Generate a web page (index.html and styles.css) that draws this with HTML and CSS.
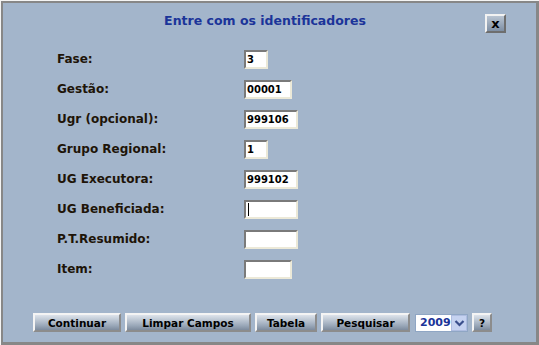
FILE: index.html
```html
<!DOCTYPE html>
<html>
<head>
<meta charset="utf-8">
<link rel="stylesheet" href="styles.css">
</head>
<body>
<div class="dialog">
  <div class="titlebar">
    <div class="title">Entre com os identificadores</div>
    <button class="close">x</button>
  </div>
  <div class="form">
    <div class="row"><span class="label">Fase:</span><span class="input w24">3</span></div>
    <div class="row"><span class="label">Gestão:</span><span class="input w48">00001</span></div>
    <div class="row"><span class="label">Ugr (opcional):</span><span class="input w54">999106</span></div>
    <div class="row"><span class="label">Grupo Regional:</span><span class="input w24">1</span></div>
    <div class="row"><span class="label">UG Executora:</span><span class="input w54">999102</span></div>
    <div class="row"><span class="label">UG Beneficiada:</span><span class="input w54"><span class="caret"></span></span></div>
    <div class="row"><span class="label">P.T.Resumido:</span><span class="input w54"></span></div>
    <div class="row"><span class="label">Item:</span><span class="input w48"></span></div>
  </div>
  <div class="actions">
    <button class="btn b-cont">Continuar</button>
    <button class="btn b-limp">Limpar Campos</button>
    <button class="btn b-tab">Tabela</button>
    <button class="btn b-pesq">Pesquisar</button>
    <div class="select"><span class="sel-val">2009</span><span class="sel-arrow"><svg width="11" height="8" viewBox="0 0 11 8"><path d="M1.5 2 L5.5 6 L9.5 2" fill="none" stroke="#3a4f8c" stroke-width="2.2"/></svg></span></div>
    <button class="btn b-help">?</button>
  </div>
</div>
</body>
</html>
```
FILE: styles.css
```css
html, body {
  margin: 0;
  padding: 0;
  background: #ffffff;
}
body {
  width: 539px;
  height: 345px;
  font-family: "DejaVu Sans", Verdana, sans-serif;
}
.dialog {
  box-sizing: border-box;
  width: 539px;
  height: 345px;
  border-top: 1px solid #f4f4f4;
  border-left: 1px solid #f4f4f4;
  display: flex;
  flex-direction: column;
  box-shadow: inset 2px 2px 0 #878787, inset -3px -3px 0 #878787;
  background: #a3b5cb;
}
.titlebar {
  position: relative;
  height: 43px;
  display: flex;
  justify-content: center;
  align-items: flex-start;
}
.title {
  margin-top: 12px;
  margin-left: -10px;
  color: #1b3499;
  font-weight: bold;
  font-size: 12.5px;
}
.close {
  position: absolute;
  left: 484px;
  top: 13px;
  width: 21px;
  height: 19px;
  padding: 0;
  box-sizing: border-box;
  border: 2px solid;
  border-color: #f2f2f2 #6e6e6e #6e6e6e #f2f2f2;
  background: linear-gradient(#b9c4d2, #7e8fa4);
  color: #000;
  font-family: "DejaVu Sans", sans-serif;
  font-weight: bold;
  font-size: 13px;
  line-height: 12px;
}
.form {
  display: flex;
  flex-direction: column;
  padding-left: 56px;
}
.row {
  height: 30px;
  display: flex;
  align-items: center;
}
.label {
  width: 187px;
  font-weight: bold;
  font-size: 12px;
  color: #1e1408;
}
.input {
  box-sizing: border-box;
  height: 19px;
  background: #ffffff;
  border: 2px solid;
  border-color: #7a7a7a #ece9d8 #ece9d8 #7a7a7a;
  font-size: 10px;
  font-weight: bold;
  color: #000;
  padding-left: 1px;
  line-height: 15px;
  display: flex;
  align-items: center;
}
.w24 { width: 24px; }
.w48 { width: 48px; }
.w54 { width: 54px; }
.caret {
  display: block;
  width: 1px;
  height: 13px;
  background: #000;
  margin-left: 1px;
}
.actions {
  margin-top: auto;
  margin-bottom: 13px;
  display: flex;
  align-items: center;
  gap: 4px;
  padding-left: 32px;
}
.btn {
  box-sizing: border-box;
  height: 19px;
  padding: 0;
  border: 2px solid;
  border-color: #f4f4f4 #8c8c8c #8c8c8c #f4f4f4;
  background: linear-gradient(#dde3eb, #9aa8b9 70%, #7d8b9d);
  font-family: "DejaVu Sans", sans-serif;
  font-weight: bold;
  font-size: 10.5px;
  color: #000;
  line-height: 14px;
}
.b-cont { width: 88px; }
.b-limp { width: 126px; }
.b-tab { width: 62px; }
.b-pesq { width: 89px; }
.b-help { width: 20px; }
.select {
  box-sizing: border-box;
  width: 53px;
  height: 18px;
  margin-left: 1px;
  background: #fff;
  border: 1px solid #8fa6c4;
  display: flex;
  align-items: center;
  justify-content: space-between;
}
.sel-val {
  font-size: 11px;
  font-weight: bold;
  color: #1b3499;
  padding-left: 4px;
}
.sel-arrow {
  width: 16px;
  height: 16px;
  margin-right: 0;
  background: #c5d2f0;
  border: 1px solid #aebde0;
  box-sizing: border-box;
  display: flex;
  align-items: center;
  justify-content: center;
}
```
